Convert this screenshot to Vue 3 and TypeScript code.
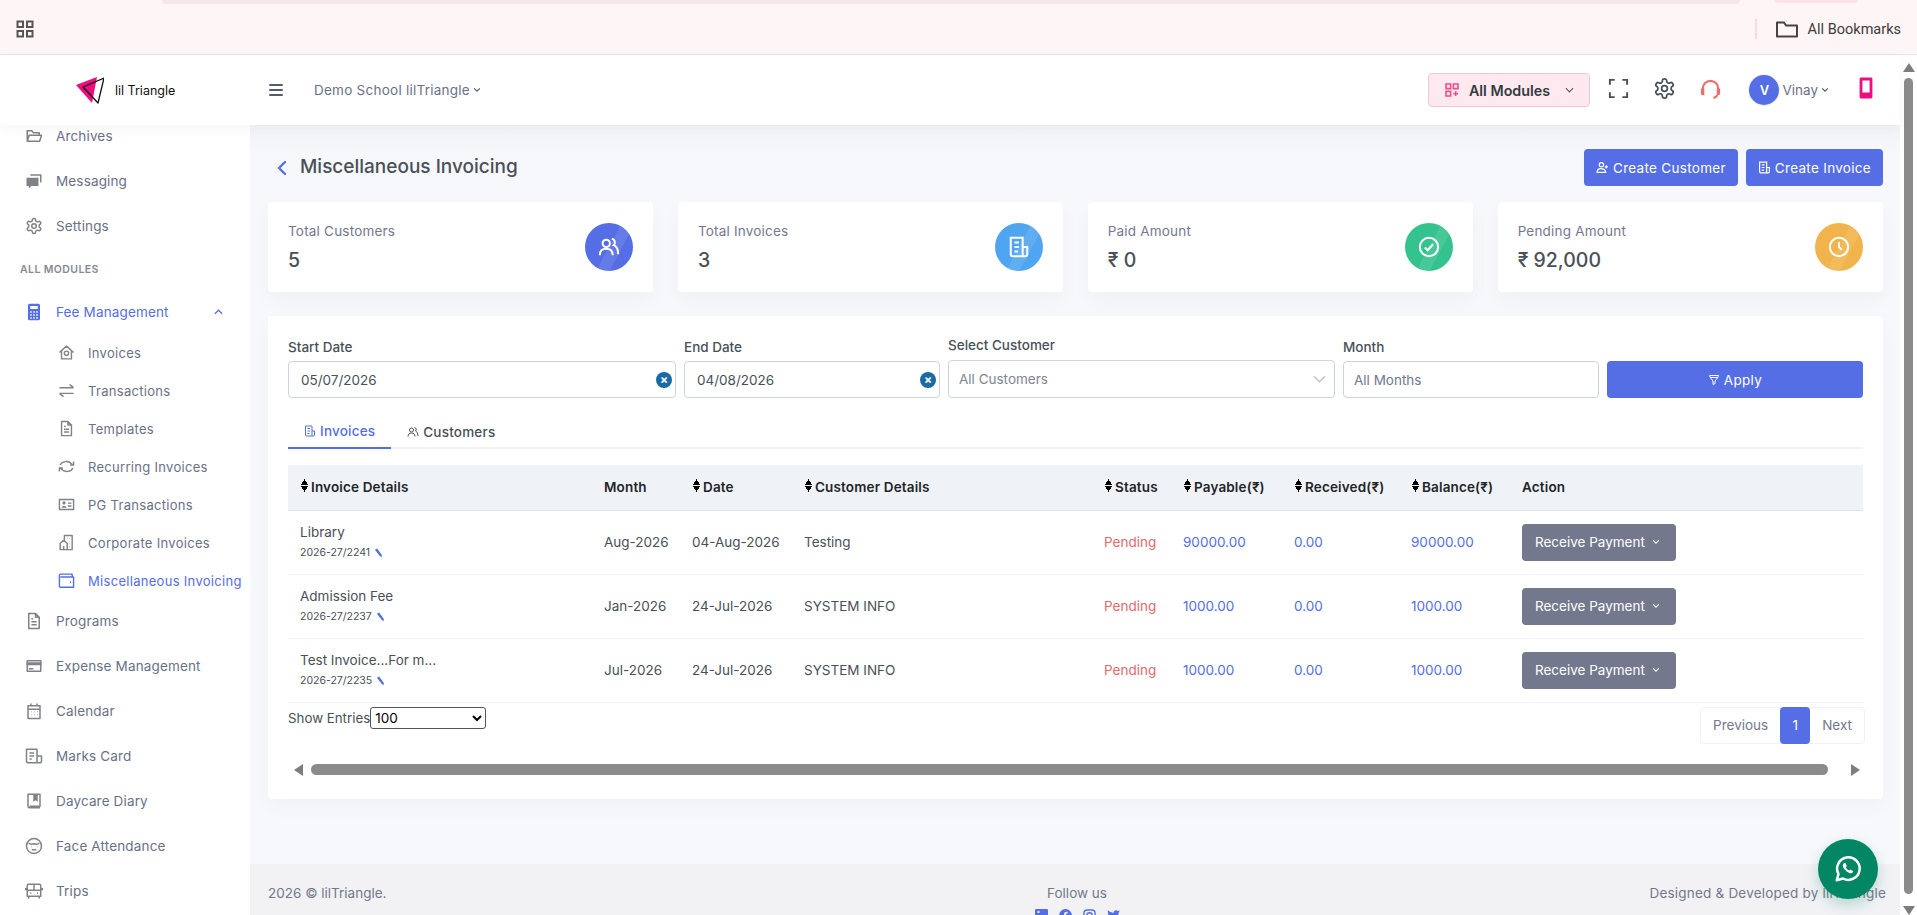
<script setup lang="ts">
interface Glyph {
  d?: string;
  fill?: string;
}

// icons are stroked with d and filled with fill, both on a 24 box
const icons: Record<string, Glyph> = {
  folder: { d: "M3 19V5h6l2 2.5h8V11M3 19l2.5-8H22l-2.5 8z" },
  chat: {
    d: "M7 4h14v10",
    fill: "M2 7.5h16v11H8.5L5 22v-3.5H2z",
  },
  gear: {
    d: "M12.22 2h-.44a2 2 0 0 0-2 2v.18a2 2 0 0 1-1 1.73l-.43.25a2 2 0 0 1-2 0l-.15-.08a2 2 0 0 0-2.73.73l-.22.38a2 2 0 0 0 .73 2.73l.15.1a2 2 0 0 1 1 1.72v.51a2 2 0 0 1-1 1.74l-.15.09a2 2 0 0 0-.73 2.73l.22.38a2 2 0 0 0 2.73.73l.15-.08a2 2 0 0 1 2 0l.43.25a2 2 0 0 1 1 1.73V20a2 2 0 0 0 2 2h.44a2 2 0 0 0 2-2v-.18a2 2 0 0 1 1-1.73l.43-.25a2 2 0 0 1 2 0l.15.08a2 2 0 0 0 2.73-.73l.22-.39a2 2 0 0 0-.73-2.73l-.15-.08a2 2 0 0 1-1-1.74v-.5a2 2 0 0 1 1-1.74l.15-.09a2 2 0 0 0 .73-2.73l-.22-.38a2 2 0 0 0-2.73-.73l-.15.08a2 2 0 0 1-2 0l-.43-.25a2 2 0 0 1-1-1.73V4a2 2 0 0 0-2-2zM15 12a3 3 0 1 1-6 0 3 3 0 0 1 6 0z",
  },
  calculator: {
    fill: "M6 1h12a2 2 0 0 1 2 2v18a2 2 0 0 1-2 2H6a2 2 0 0 1-2-2V3a2 2 0 0 1 2-2zM7 4v4h10V4zM7 11v2h2v-2zM11 11v2h2v-2zM15 11v2h2v-2zM7 15v2h2v-2zM11 15v2h2v-2zM15 15v2h2v-2zM7 19v2h2v-2zM11 19v2h2v-2zM15 19v2h2v-2z",
  },
  home: { d: "M2 12l10-9 10 9M5 10v11h14V10M15 13a3 3 0 1 1-6 0 3 3 0 0 1 6 0z" },
  transfer: { d: "M2 8h20M16 4h1l5 4M22 16H2M8 20H7l-5-4" },
  file: { d: "M5 2h9l5 5v15H5zM14 2v5h5M8.5 9H11M8.5 13h7M8.5 17h7" },
  sync: { d: "M3 10a9 7 0 0 1 16-2l2 2M22 5v5h-5M21 14a9 7 0 0 1-16 2l-2-2M2 19v-5h5" },
  idcard: {
    d: "M2 5h20v14H2zM14 10h5M14 14h5",
    fill: "M8.5 7.5a2 2 0 1 1 0 4.5 2 2 0 0 1 0-4.5zM5 16.500c0-3 7-3 7 0z",
  },
  building: { d: "M9 10V2h11v20H3V13l5-4 5 4v9M13 6h.5M16 6h.5M16 10h.5M16 14h.5M16 18h.5M8 17v5" },
  wallet: { d: "M20 7V3H4a2 2 0 0 0-2 2v15a1.5 1.5 0 0 0 1.5 1.5H22V7H3.5M17 14.5h1.5" },
  bill: { d: "M3 5h18v14H3z", fill: "M2 7h20v4H2zM5 14.5h6v2H5z" },
  calendar: { d: "M4 5h16v17H4zM8 2v4M16 2v4M4 9.5h16M8 13h.5M12 13h.5M16 13h.5M8 17h.5M12 17h.5M16 17h.5" },
  marks: { d: "M2 3h14v18H4a2 2 0 0 1-2-2zM16 12h6v7a2 2 0 0 1-2 2h-4M6 8h6M6 12h6M6 16h3" },
  book: { d: "M4 19V3h16v16H6M4 19a2 2 0 0 0 2 2h14", fill: "M11 3h6v10l-3-2-3 2z" },
  face: { d: "M12 2a10 10 0 1 0 0 20 10 10 0 0 0 0-20zM5 8c2 2 4 2 7 1 3 1 5 1 7-1M8 13h.5M16 13h.5M9 17h6" },
  bus: { d: "M5 3h14a2 2 0 0 1 2 2v14H3V5a2 2 0 0 1 2-2zM3 11h18M12 3v8M5 19v3M19 19v3M7 15h1.5M16 15h1.5M1 8v3M23 8v3" },
  modules: { d: "M3 3h7v7H3zM14 3h7v7h-7zM3 14h7v7H3zM14 17.5h7M17.5 14v7" },
  expand: { d: "M3 8V3h5M16 3h5v5M21 16v5h-5M8 21H3v-5" },
  headset: { d: "M4 15v-3a8 8 0 0 1 16 0v3M19 19a4 4 0 0 1-4 2.5", fill: "M2 12h3.5v7H4a2 2 0 0 1-2-2zM18.5 12H22v5a2 2 0 0 1-2 2h-1.5z" },
  phone: { d: "M7 3h10v18H7zM7 18h10" },
  userPlus: { d: "M10 3a4 4 0 1 0 0 8 4 4 0 0 0 0-8zM2 21c0-9 14-9 16 0H2zM19 8v6M16 11h6" },
  invoice: { d: "M3 2h13v20H5a2 2 0 0 1-2-2zM16 12h5v8a2 2 0 0 1-2 2h-3M7 7h5M7 12h5M7 17h4" },
  people: { d: "M9 4a4 4 0 1 0 0 8 4 4 0 0 0 0-8zM2 21c0-5 3-7 7-7s7 2 7 7M15 3a4 4 0 0 1 2 7c3 1 5 5 5 10" },
  check: { d: "M12 2a10 10 0 1 0 0 20 10 10 0 0 0 0-20zM7.5 12.5l3 3 6-6.5" },
  clock: { d: "M12 2a10 10 0 1 0 0 20 10 10 0 0 0 0-20zM12 6.5V12l3 3" },
  filter: { d: "M3 3h18l-1.5 4h-15zM4.5 7L10 14v7l4-2v-5l5.5-7" },
};

const topLinks = [
  { label: "Archives", icon: "folder" },
  { label: "Messaging", icon: "chat" },
  { label: "Settings", icon: "gear" },
];

const feeLinks = [
  { label: "Invoices", icon: "home" },
  { label: "Transactions", icon: "transfer" },
  { label: "Templates", icon: "file" },
  { label: "Recurring Invoices", icon: "sync" },
  { label: "PG Transactions", icon: "idcard" },
  { label: "Corporate Invoices", icon: "building" },
  { label: "Miscellaneous Invoicing", icon: "wallet", active: true },
];

const moduleLinks = [
  { label: "Programs", icon: "file" },
  { label: "Expense Management", icon: "bill" },
  { label: "Calendar", icon: "calendar" },
  { label: "Marks Card", icon: "marks" },
  { label: "Daycare Diary", icon: "book" },
  { label: "Face Attendance", icon: "face" },
  { label: "Trips", icon: "bus" },
];

const stats = [
  { label: "Total Customers", value: "5", icon: "people", tone: "tone-primary" },
  { label: "Total Invoices", value: "3", icon: "invoice", tone: "tone-info" },
  { label: "Paid Amount", value: "₹ 0", icon: "check", tone: "tone-success" },
  { label: "Pending Amount", value: "₹ 92,000", icon: "clock", tone: "tone-warning" },
];

const columns = [
  { label: "Invoice Details", sort: true },
  { label: "Month", sort: false },
  { label: "Date", sort: true },
  { label: "Customer Details", sort: true },
  { label: "Status", sort: true },
  { label: "Payable(₹)", sort: true },
  { label: "Received(₹)", sort: true },
  { label: "Balance(₹)", sort: true },
  { label: "Action", sort: false },
];

const invoices = [
  { name: "Library", no: "2026-27/2241", month: "Aug-2026", date: "04-Aug-2026", customer: "Testing", payable: "90000.00", received: "0.00", balance: "90000.00" },
  { name: "Admission Fee", no: "2026-27/2237", month: "Jan-2026", date: "24-Jul-2026", customer: "SYSTEM INFO", payable: "1000.00", received: "0.00", balance: "1000.00" },
  { name: "Test Invoice...For m...", no: "2026-27/2235", month: "Jul-2026", date: "24-Jul-2026", customer: "SYSTEM INFO", payable: "1000.00", received: "0.00", balance: "1000.00" },
];
</script>

<template>
  <div class="browser-bar">
    <div class="tab-row">
      <div class="tab-strip"></div>
      <div class="tab-pill"></div>
    </div>
    <div class="browser-row">
      <svg class="apps" viewBox="0 0 18 18" fill="none" stroke="#555" stroke-width="2">
        <rect x="1.5" y="1.5" width="5.5" height="5.5" />
        <rect x="11" y="1.5" width="5.5" height="5.5" />
        <rect x="1.5" y="11" width="5.5" height="5.5" />
        <rect x="11" y="11" width="5.5" height="5.5" />
      </svg>
      <span class="bar-sep"></span>
      <svg class="bm-folder" viewBox="0 0 22 17" fill="none" stroke="#444" stroke-width="2" stroke-linejoin="round">
        <path d="M1 15.5V1.5h7l2 3h11v11z" />
      </svg>
      <span class="bm-text">All Bookmarks</span>
    </div>
  </div>

  <div class="shell">
    <div class="page">
      <header class="topbar">
        <div class="brand">
          <svg class="logo" viewBox="0 0 28 28" fill="none">
            <path d="M0 9 21 1 16 27z" fill="#ec0d7f" />
            <path d="M28 2 7 11 22 27z" stroke="#111" stroke-width="1.3" stroke-linejoin="round" />
          </svg>
          <span class="brand-name">lil Triangle</span>
        </div>
        <svg class="burger" viewBox="0 0 14 12" fill="#555b6d">
          <rect width="14" height="2" rx="1" />
          <rect y="5" width="14" height="2" rx="1" />
          <rect y="10" width="14" height="2" rx="1" />
        </svg>
        <span class="school">Demo School lilTriangle</span>
        <svg class="caret" viewBox="0 0 10 6" fill="none" stroke="#555b6d" stroke-width="1.5"><path d="M1.5 1 5 4.5 8.5 1" /></svg>

        <button class="modules-btn">
          <svg viewBox="0 0 24 24" fill="none" stroke="#ec4f8c" stroke-width="2.4"><path :d="icons.modules.d" /></svg>
          <span>All Modules</span>
          <svg class="modules-caret" viewBox="0 0 10 6" fill="none" stroke="#555b6d" stroke-width="1.3"><path d="M1 1 5 5 9 1" /></svg>
        </button>
        <svg class="top-icon first" viewBox="0 0 24 24" fill="none" stroke="#495057" stroke-width="2"><path :d="icons.expand.d" /></svg>
        <svg class="top-icon" viewBox="0 0 24 24" fill="none" stroke="#495057" stroke-width="1.8"><path :d="icons.gear.d" /></svg>
        <svg class="top-icon" viewBox="0 0 24 24" fill="none" stroke="#ef6c6c" stroke-width="2.2"><path :d="icons.headset.d" /><path :d="icons.headset.fill" fill="#ef6c6c" stroke="none" /></svg>
        <span class="avatar">V</span>
        <span class="user">Vinay</span>
        <svg class="caret" viewBox="0 0 10 6" fill="none" stroke="#555b6d" stroke-width="1.5"><path d="M1.5 1 5 4.5 8.5 1" /></svg>
        <svg class="top-icon phone" viewBox="0 0 24 24" fill="none" stroke="#ec0d7f" stroke-width="2.8" stroke-linejoin="round"><path :d="icons.phone.d" /></svg>
      </header>

      <div class="body">
        <aside class="sidebar">
          <a v-for="link in topLinks" :key="link.label" class="nav-item">
            <svg viewBox="0 0 24 24" fill="none" stroke="currentColor" stroke-width="2" stroke-linejoin="round">
              <path v-if="icons[link.icon].d" :d="icons[link.icon].d" />
              <path v-if="icons[link.icon].fill" :d="icons[link.icon].fill" fill="currentColor" stroke="none" fill-rule="evenodd" />
            </svg>
            <span>{{ link.label }}</span>
          </a>
          <div class="nav-title">ALL MODULES</div>
          <a class="nav-item open">
            <svg viewBox="0 0 24 24"><path :d="icons.calculator.fill" fill="currentColor" fill-rule="evenodd" /></svg>
            <span>Fee Management</span>
            <svg class="nav-caret" viewBox="0 0 10 6" fill="none" stroke="currentColor" stroke-width="1.4"><path d="M1 5 5 1 9 5" /></svg>
          </a>
          <div class="subnav">
            <a v-for="link in feeLinks" :key="link.label" class="sub-item" :class="{ active: link.active }">
              <svg viewBox="0 0 24 24" fill="none" stroke="currentColor" stroke-width="2" stroke-linejoin="round">
                <path :d="icons[link.icon].d" />
                <path v-if="icons[link.icon].fill" :d="icons[link.icon].fill" fill="currentColor" stroke="none" />
              </svg>
              <span>{{ link.label }}</span>
            </a>
          </div>
          <a v-for="link in moduleLinks" :key="link.label" class="nav-item">
            <svg viewBox="0 0 24 24" fill="none" stroke="currentColor" stroke-width="2" stroke-linejoin="round">
              <path :d="icons[link.icon].d" />
              <path v-if="icons[link.icon].fill" :d="icons[link.icon].fill" fill="currentColor" stroke="none" />
            </svg>
            <span>{{ link.label }}</span>
          </a>
        </aside>

        <main class="main">
          <div class="title-row">
            <svg class="back" viewBox="0 0 10 16" fill="none" stroke="#556ee6" stroke-width="2.4" stroke-linecap="round" stroke-linejoin="round"><path d="M8 2 2 8l6 6" /></svg>
            <h1>Miscellaneous Invoicing</h1>
            <button class="btn first-btn">
              <svg viewBox="0 0 24 24" fill="none" stroke="#fff" stroke-width="2.2"><path :d="icons.userPlus.d" /></svg>
              Create Customer
            </button>
            <button class="btn">
              <svg viewBox="0 0 24 24" fill="none" stroke="#fff" stroke-width="2.2"><path :d="icons.invoice.d" /></svg>
              Create Invoice
            </button>
          </div>

          <section class="stats">
            <div v-for="stat in stats" :key="stat.label" class="stat">
              <div class="stat-text">
                <p class="stat-label">{{ stat.label }}</p>
                <p class="stat-value">{{ stat.value }}</p>
              </div>
              <div class="stat-icon" :class="stat.tone">
                <svg viewBox="0 0 24 24" fill="none" stroke="#fff" stroke-width="2.2"><path :d="icons[stat.icon].d" /></svg>
              </div>
            </div>
          </section>

          <section class="panel">
            <div class="filters">
              <label class="filter">
                <span>Start Date</span>
                <div class="date-wrap">
                  <input class="field date" value="05/07/2026" readonly />
                  <i class="clear">×</i>
                </div>
              </label>
              <label class="filter">
                <span>End Date</span>
                <div class="date-wrap">
                  <input class="field date" value="04/08/2026" readonly />
                  <i class="clear">×</i>
                </div>
              </label>
              <label class="filter">
                <span class="raised">Select Customer</span>
                <div class="fake-select">
                  <span>All Customers</span>
                  <svg viewBox="0 0 14 8" fill="none" stroke="#bfc3c9" stroke-width="1.5"><path d="M1 1l6 6 6-6" /></svg>
                </div>
              </label>
              <label class="filter">
                <span>Month</span>
                <input class="field" placeholder="All Months" readonly />
              </label>
              <button class="btn apply">
                <svg viewBox="0 0 24 24" fill="none" stroke="#fff" stroke-width="2"><path :d="icons.filter.d" /></svg>
                Apply
              </button>
            </div>

            <div class="tabs">
              <a class="tab active">
                <svg viewBox="0 0 24 24" fill="none" stroke="currentColor" stroke-width="2"><path :d="icons.invoice.d" /></svg>
                Invoices
              </a>
              <a class="tab">
                <svg viewBox="0 0 24 24" fill="none" stroke="currentColor" stroke-width="2"><path :d="icons.people.d" /></svg>
                Customers
              </a>
            </div>

            <table class="grid">
              <colgroup>
                <col class="c-invoice" />
                <col class="c-month" />
                <col class="c-date" />
                <col class="c-customer" />
                <col class="c-status" />
                <col class="c-money" />
                <col class="c-received" />
                <col class="c-money" />
                <col />
              </colgroup>
              <thead>
                <tr>
                  <th v-for="col in columns" :key="col.label">
                    <span v-if="col.sort" class="sort"></span>{{ col.label }}
                  </th>
                </tr>
              </thead>
              <tbody>
                <tr v-for="row in invoices" :key="row.no">
                  <td class="inv-cell">
                    <div class="inv-name">{{ row.name }}</div>
                    <div class="inv-no">
                      {{ row.no }}
                      <svg viewBox="0 0 10 10" fill="#556ee6"><path d="M1 2 3.5.5l5 7L9 10l-2.500-1z" /></svg>
                    </div>
                  </td>
                  <td>{{ row.month }}</td>
                  <td>{{ row.date }}</td>
                  <td>{{ row.customer }}</td>
                  <td class="pending">Pending</td>
                  <td class="amount">{{ row.payable }}</td>
                  <td class="amount">{{ row.received }}</td>
                  <td class="amount">{{ row.balance }}</td>
                  <td>
                    <button class="pay-btn">
                      Receive Payment
                      <svg viewBox="0 0 10 6" fill="none" stroke="#fff" stroke-width="1.5"><path d="M1.5 1 5 4.5 8.5 1" /></svg>
                    </button>
                  </td>
                </tr>
              </tbody>
            </table>

            <div class="table-foot">
              <div class="entries">
                <span>Show Entries</span>
                <select class="entries-select">
                  <option>100</option>
                  <option>50</option>
                  <option>25</option>
                </select>
              </div>
              <div class="pager">
                <a>Previous</a>
                <a class="current">1</a>
                <a>Next</a>
              </div>
            </div>

            <div class="hscroll">
              <i class="arrow-left"></i>
              <div class="hthumb"></div>
              <i class="arrow-right"></i>
            </div>
          </section>

          <footer class="footer">
            <span>2026 © lilTriangle.</span>
            <div class="follow">
              <span>Follow us</span>
              <div class="socials">
                <svg viewBox="0 0 13 13" fill="#556ee6"><path d="M1 0h11a1 1 0 0 1 1 1v11a1 1 0 0 1-1 1H1a1 1 0 0 1-1-1V1a1 1 0 0 1 1-1zM2.5 2v2h2V2z" fill-rule="evenodd" /></svg>
                <svg viewBox="0 0 14 14" fill="#556ee6"><path d="M7 0a7 7 0 1 1 0 14A7 7 0 0 1 7 0zM8 3C6.5 3 5.500 4 5.500 5.500V7H4v2h1.500v5h2V9H9l.3-2H7.500V5.500c0-.4.3-.6.7-.6h1.100V3z" fill-rule="evenodd" /></svg>
                <svg viewBox="0 0 14 14" fill="none" stroke="#556ee6" stroke-width="1.5"><rect x="1" y="1" width="12" height="12" rx="3.5" /><circle cx="7" cy="7" r="3" /></svg>
                <svg viewBox="0 0 14 12" fill="#556ee6"><path d="M14 1.5c-.5.2-1 .4-1.600.4.600-.3 1-.8 1.200-1.500-.5.3-1.100.6-1.800.7A2.800 2.800 0 0 0 7 3.200C4.700 3.100 2.600 2 1.200.4.400 1.700.8 3.300 2 4.100c-.5 0-.9-.1-1.300-.3 0 1.300 1 2.500 2.300 2.800-.4.1-.9.1-1.300 0 .4 1.100 1.400 1.900 2.700 1.900A5.700 5.700 0 0 1 0 9.700 8 8 0 0 0 12.500 3c.6-.4 1.100-.9 1.500-1.500z" /></svg>
              </div>
            </div>
            <span class="credit">Designed &amp; Developed by lilTriangle</span>
          </footer>
        </main>
      </div>
    </div>

    <div class="vscroll">
      <i class="arrow-up"></i>
      <div class="vthumb"></div>
      <i class="arrow-down"></i>
    </div>
  </div>

  <a class="whatsapp">
    <svg viewBox="0 0 24 24" fill="none" stroke="#fff" stroke-width="2">
      <path d="M3 21l1.400-5A9 9 0 1 1 8 19.600z" stroke-linejoin="round" />
      <path d="M8.500 7.500c-1 1-1 3 1.500 5.500s4.500 3 5.500 2l.8-1.300-2.400-1.400-1 .9c-1-.4-2.200-1.600-2.700-2.700l.9-1-1.300-2.500z" fill="#fff" stroke="none" />
    </svg>
  </a>
</template>

<style>
html,
body {
  height: 915px;
  overflow: hidden;
  background: #fff;
}
</style>

<style scoped>
* {
  box-sizing: border-box;
}

.browser-bar {
  height: 55px;
  background: #fef6f6;
  border-bottom: 1px solid #f3dfe3;
  font-family: Roboto, sans-serif;
}

.tab-row {
  display: flex;
  height: 4px;
}

.tab-strip {
  width: 1578px;
  margin-left: 162px;
  background: #f6e7ea;
  border-radius: 0 0 12px 12px;
}

.tab-pill {
  width: 83px;
  height: 3px;
  margin-left: 35px;
  background: #fde3e6;
  border-radius: 0 0 12px 12px;
}

.browser-row {
  display: flex;
  align-items: center;
  height: 50px;
  padding: 0 16px;
}

.apps {
  width: 18px;
  height: 18px;
}

.bar-sep {
  width: 2px;
  height: 20px;
  margin-left: auto;
  background: #fbd9de;
}

.bm-folder {
  width: 22px;
  height: 17px;
  margin-left: 19px;
}

.bm-text {
  margin-left: 10px;
  font-size: 14.5px;
  color: #3c3c3c;
}

.shell {
  display: flex;
  height: 860px;
  font-family: Inter, "Noto Sans", sans-serif;
  color: #495057;
}

.page {
  flex: 1;
  min-width: 0;
  display: flex;
  flex-direction: column;
}

.topbar {
  position: relative;
  z-index: 2;
  flex: none;
  display: flex;
  align-items: center;
  height: 70px;
  padding-right: 22px;
  background: #fff;
  box-shadow: 0 4px 14px rgba(18, 38, 63, 0.04);
}

.brand {
  display: flex;
  align-items: center;
  width: 250px;
  padding-left: 76px;
}

.logo {
  width: 28px;
  height: 28px;
}

.brand-name {
  margin-left: 11px;
  font-size: 12.5px;
  color: #111;
}

.burger {
  width: 14px;
  height: 12px;
  margin-left: 19px;
}

.school {
  margin-left: 31px;
  font-size: 13.5px;
  color: #6a7187;
  letter-spacing: 0.25px;
}

.caret {
  width: 8px;
  height: 6px;
  margin-left: 3px;
}

.modules-btn {
  display: flex;
  align-items: center;
  width: 162px;
  height: 34px;
  margin-left: auto;
  padding: 0 15px;
  background: #fde9ef;
  border: 1px solid #f6c5d3;
  border-radius: 4px;
  font: 600 14.3px Inter, sans-serif;
  color: #343a40;
}

.modules-btn svg {
  width: 16px;
  height: 16px;
  margin-right: 9px;
}

.modules-btn .modules-caret {
  width: 9px;
  height: 6px;
  margin: 0 0 0 auto;
}

.top-icon {
  width: 23px;
  height: 23px;
  margin: -4px 11.5px 0;
}

.top-icon.first {
  margin-left: 17.5px;
}

.avatar {
  width: 30px;
  height: 30px;
  margin-left: 15.5px;
  border-radius: 50%;
  background: #556ee6;
  box-shadow: 0 0 0 1px #eef0fc;
  color: #fff;
  font-size: 13px;
  font-weight: 600;
  line-height: 30px;
  text-align: center;
}

.user {
  margin-left: 3px;
  font-size: 13.5px;
  color: #6a7187;
}

.top-icon.phone {
  width: 24px;
  height: 24px;
  margin: -4px 0 0 25px;
}

.body {
  flex: 1;
  min-height: 0;
  display: flex;
}

.sidebar {
  flex: none;
  width: 250px;
  background: #fff;
  overflow: hidden;
}

.nav-item {
  display: flex;
  align-items: center;
  height: 45px;
  padding-left: 25px;
  font-size: 13.5px;
  letter-spacing: 0.15px;
  color: #6a7187;
}

.nav-item:first-child {
  height: 22px;
  margin-bottom: 11px;
}

.nav-item svg {
  flex: none;
  width: 18px;
  height: 18px;
  margin-right: 13px;
  color: #7f8289;
}

.nav-title {
  height: 45px;
  padding-left: 20px;
  font-size: 10.5px;
  font-weight: 600;
  line-height: 44px;
  letter-spacing: 0.4px;
  color: #858a91;
}

.nav-item.open {
  height: 38px;
  padding-right: 27px;
  color: #556ee6;
}

.nav-item.open svg {
  color: #556ee6;
}

.nav-item.open .nav-caret {
  width: 9px;
  height: 6px;
  margin: 0 0 0 auto;
}

.subnav {
  margin-bottom: -1px;
  padding-top: 2.5px;
}

.sub-item {
  display: flex;
  align-items: center;
  height: 38px;
  padding-left: 58px;
  font-size: 13px;
  letter-spacing: 0.3px;
  color: #6a7187;
  white-space: nowrap;
}

.sub-item svg {
  flex: none;
  width: 17px;
  height: 17px;
  margin-right: 13px;
  color: #7f8289;
}

.sub-item.active,
.sub-item.active svg {
  color: #556ee6;
}

.main {
  flex: 1;
  min-width: 0;
  display: flex;
  flex-direction: column;
  padding: 24px 17px 0 18px;
  background: linear-gradient(#f2f3f7, #f7f8fb 30px);
}

.title-row {
  flex: none;
  display: flex;
  align-items: center;
  height: 37px;
}

.back {
  width: 10px;
  height: 16px;
  margin: 0 8px 0 9px;
}

.title-row h1 {
  margin: 0 auto 2px 5px;
  font-size: 19px;
  font-weight: 500;
  color: #495057;
}

.btn {
  display: flex;
  align-items: center;
  justify-content: center;
  height: 37px;
  padding: 0 12px;
  border: 0;
  border-radius: 4px;
  background: #556ee6;
  color: #fff;
  font: 400 13.5px Inter, sans-serif;
  letter-spacing: 0.3px;
}

.btn svg {
  width: 13px;
  height: 13px;
  margin-right: 4px;
}

.first-btn {
  margin-right: 8px;
}

.stats {
  flex: none;
  display: grid;
  grid-template-columns: repeat(4, 1fr);
  gap: 24.5px;
  margin-top: 16px;
}

.stat {
  display: flex;
  align-items: center;
  justify-content: space-between;
  height: 90px;
  padding: 0 20px;
  border-radius: 4px;
  background: #fff;
  box-shadow: 0 8px 20px rgba(18, 38, 63, 0.03);
}

.stat-label {
  margin: 0 0 9px;
  font-size: 13.5px;
  letter-spacing: 0.2px;
  color: #74788d;
}

.stat-value {
  margin: 0;
  font-size: 19.5px;
  font-weight: 500;
  color: #495057;
}

.stat-icon {
  display: flex;
  align-items: center;
  justify-content: center;
  width: 48px;
  height: 48px;
  border-radius: 50%;
  background-image: linear-gradient(118deg, transparent 50%, rgba(255, 255, 255, 0.09) 50%, rgba(255, 255, 255, 0.09) 68%, transparent 68%);
}

.stat-icon svg {
  width: 22px;
  height: 22px;
}

.tone-primary {
  background-color: #556ee6;
}

.tone-info {
  background-color: #50a5f1;
}

.tone-success {
  background-color: #34c38f;
}

.tone-warning {
  background-color: #f1b44c;
}

.panel {
  flex: none;
  height: 483px;
  margin-top: 24px;
  padding: 19px 20px 0;
  border-radius: 4px;
  background: #fff;
  box-shadow: 0 8px 20px rgba(18, 38, 63, 0.03);
}

.filters {
  display: grid;
  grid-template-columns: 388px 256px 387px 256px 256px;
  gap: 8px;
  align-items: end;
}

.filter {
  display: flex;
  flex-direction: column;
  font-size: 13.5px;
  font-weight: 500;
  color: #495057;
}

.filter > span {
  margin-bottom: 4px;
  line-height: 20px;
}

.filter > span.raised {
  margin-bottom: 5px;
}

.date-wrap {
  position: relative;
}

.field {
  display: block;
  width: 100%;
  height: 37px;
  padding: 0 10px;
  border: 1px solid #ced4da;
  border-radius: 4px;
  background: #fff;
  font: 400 13.5px Inter, sans-serif;
  color: #495057;
  outline: 0;
}

.field.date {
  padding: 0 12px;
}

.field::placeholder {
  color: #74788d;
}

.clear {
  position: absolute;
  top: 11px;
  right: 4px;
  width: 16px;
  height: 16px;
  border-radius: 50%;
  background: #1a6aa5;
  color: #fff;
  font: 700 12px/15px Inter, sans-serif;
  text-align: center;
}

.fake-select {
  display: flex;
  align-items: center;
  justify-content: space-between;
  height: 38px;
  padding: 0 8px 0 10px;
  border: 1px solid #ced4da;
  border-radius: 4px;
  font-size: 13.5px;
  font-weight: 400;
  color: #808690;
}

.fake-select svg {
  width: 13px;
  height: 8px;
}

.apply {
  height: 37px;
}

.apply svg {
  width: 12px;
  height: 12px;
}

.tabs {
  display: flex;
  height: 34px;
  margin-top: 17px;
  border-bottom: 2px solid #eff2f7;
}

.tab {
  display: flex;
  align-items: center;
  height: 34px;
  padding: 0 16px;
  font-size: 13.5px;
  font-weight: 500;
  letter-spacing: 0.2px;
  color: #495057;
}

.tab svg {
  width: 12px;
  height: 12px;
  margin-right: 4px;
}

.tab.active {
  color: #556ee6;
  border-bottom: 2px solid #556ee6;
}

.grid {
  width: 100%;
  margin-top: 16px;
  border-collapse: collapse;
  table-layout: fixed;
  font-size: 13.5px;
}

.c-invoice {
  width: 304px;
}

.c-month {
  width: 88px;
}

.c-date {
  width: 112px;
}

.c-customer {
  width: 300px;
}

.c-status {
  width: 79px;
}

.c-money {
  width: 111px;
}

.c-received {
  width: 117px;
}

.grid th {
  height: 45px;
  padding: 0 0 0 12px;
  background: #eff2f7;
  border-bottom: 1px solid #dfe3e8;
  font-weight: 600;
  font-size: 13.5px;
  letter-spacing: 0.15px;
  color: #212529;
  text-align: left;
  white-space: nowrap;
}

.grid td {
  height: 64px;
  padding: 0 0 0 12px;
  border-bottom: 1px solid #eff2f7;
  color: #495057;
  white-space: nowrap;
}

.sort {
  display: inline-block;
  width: 9px;
  height: 13px;
  margin-right: 2px;
  vertical-align: 0;
  background: conic-gradient(from 148deg at 50% 0, #000 64deg, transparent 0) 0 0 / 9px 6px no-repeat,
    conic-gradient(from -32deg at 50% 100%, #000 64deg, transparent 0) 0 100% / 9px 6px no-repeat;
}

.grid .inv-cell {
  padding-bottom: 2px;
}

.inv-no {
  display: flex;
  align-items: center;
  margin-top: 6px;
  font-size: 10.5px;
}

.inv-no svg {
  width: 9px;
  height: 9px;
  margin-left: 4px;
}

.grid .pending {
  color: #e5696e;
}

.grid .amount {
  color: #556ee6;
}

.pay-btn {
  display: flex;
  align-items: center;
  width: 154px;
  height: 37px;
  padding: 0 13px;
  border: 0;
  border-radius: 4px;
  background: #74788d;
  color: #fff;
  font: 400 13.5px Inter, sans-serif;
}

.pay-btn svg {
  width: 8px;
  height: 6px;
  margin-left: 7px;
}

.table-foot {
  display: flex;
  align-items: flex-start;
  justify-content: space-between;
  margin-top: 4px;
}

.entries {
  display: flex;
  align-items: center;
  height: 22px;
  font-size: 13.3px;
  color: #495057;
}

.entries-select {
  width: 116px;
  height: 22px;
  padding: 0;
  font: 400 13.5px Inter, sans-serif;
  background: #fff;
  border: 1px solid #555;
  border-radius: 3px;
  color: #000;
}

.pager {
  display: flex;
  height: 37px;
  margin-right: -2px;
  border: 1px solid #eff2f7;
  border-radius: 4px;
  font-size: 13.5px;
  color: #74788d;
}

.pager a {
  display: flex;
  align-items: center;
  padding: 0 12px;
}

.pager .current {
  width: 30px;
  margin: -1px 0;
  padding: 0;
  justify-content: center;
  background: #556ee6;
  border-radius: 4px;
  color: #fff;
}

.hscroll {
  display: flex;
  align-items: center;
  height: 20px;
  margin-top: 16px;
  padding: 0 3px 0 6px;
}

.arrow-left {
  width: 0;
  height: 0;
  border: 6px solid transparent;
  border-left: 0;
  border-right: 9px solid #7d7d7d;
}

.arrow-right {
  width: 0;
  height: 0;
  border: 6px solid transparent;
  border-right: 0;
  border-left: 9px solid #7d7d7d;
}

.hthumb {
  flex: 1;
  height: 11px;
  margin: 0 23px 0 8px;
  border-radius: 6px;
  background: #8b8b8b;
}

.footer {
  flex: none;
  display: grid;
  grid-template-columns: 1fr auto 1fr;
  height: 51px;
  margin: auto -17px 0 -18px;
  padding: 20px 14px 0 18px;
  overflow: hidden;
  background: #f2f2f5;
  font-size: 13.5px;
  line-height: 18px;
  color: #74788d;
}

.credit {
  text-align: right;
  letter-spacing: 0.2px;
}

.follow {
  text-align: center;
}

.socials {
  display: flex;
  justify-content: center;
  gap: 11px;
  margin-top: 7px;
}

.socials svg {
  width: 13px;
  height: 13px;
}

.vscroll {
  flex: none;
  width: 17px;
  display: flex;
  flex-direction: column;
  align-items: center;
  background: #fff;
}

.arrow-up {
  margin-top: 8px;
  width: 0;
  height: 0;
  border: 6px solid transparent;
  border-top: 0;
  border-bottom: 9px solid #7d7d7d;
}

.vthumb {
  width: 9px;
  height: 818px;
  margin-top: 6px;
  border-radius: 5px;
  background: #8b8b8b;
}

.arrow-down {
  margin-top: 12px;
  width: 0;
  height: 0;
  border: 6px solid transparent;
  border-bottom: 0;
  border-top: 9px solid #7d7d7d;
}

.whatsapp {
  position: fixed;
  left: 1818px;
  top: 839px;
  display: flex;
  align-items: center;
  justify-content: center;
  width: 60px;
  height: 60px;
  border-radius: 50%;
  background: #038664;
  box-shadow: 0 6px 14px rgba(3, 134, 100, 0.25);
}

.whatsapp svg {
  width: 30px;
  height: 30px;
}
</style>
